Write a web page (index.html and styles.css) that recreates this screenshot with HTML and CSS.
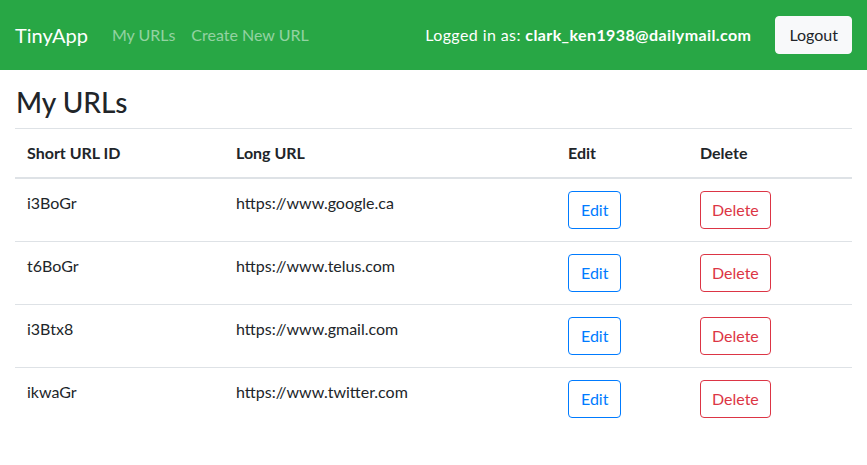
FILE: index.html
```html
<!DOCTYPE html>
<html lang="en">
<head>
<meta charset="utf-8">
<title>TinyApp</title>
<link rel="stylesheet" href="styles.css">
</head>
<body>
<nav class="navbar">
  <div class="nav-left">
    <a class="brand" href="#">TinyApp</a>
    <a class="nav-link" href="#">My URLs</a>
    <a class="nav-link" href="#">Create New URL</a>
  </div>
  <div class="nav-right">
    <span class="user">Logged in as: <b>clark_ken1938@dailymail.com</b></span>
    <button class="btn btn-light">Logout</button>
  </div>
</nav>
<main class="container">
  <h3 class="title">My URLs</h3>
  <table class="table">
    <colgroup>
      <col class="c1"><col class="c2"><col class="c3"><col class="c4">
    </colgroup>
    <thead>
      <tr><th>Short URL ID</th><th>Long URL</th><th>Edit</th><th>Delete</th></tr>
    </thead>
    <tbody>
      <tr><td>i3BoGr</td><td>https://www.google.ca</td><td><button class="btn btn-outline-primary">Edit</button></td><td><button class="btn btn-outline-danger">Delete</button></td></tr>
      <tr><td>t6BoGr</td><td>https://www.telus.com</td><td><button class="btn btn-outline-primary">Edit</button></td><td><button class="btn btn-outline-danger">Delete</button></td></tr>
      <tr><td>i3Btx8</td><td>https://www.gmail.com</td><td><button class="btn btn-outline-primary">Edit</button></td><td><button class="btn btn-outline-danger">Delete</button></td></tr>
      <tr><td>ikwaGr</td><td>https://www.twitter.com</td><td><button class="btn btn-outline-primary">Edit</button></td><td><button class="btn btn-outline-danger">Delete</button></td></tr>
    </tbody>
  </table>
</main>
</body>
</html>
```

FILE: styles.css
```css
* { box-sizing: border-box; }
body {
  margin: 0;
  font-family: "Lato", "Noto Sans", sans-serif;
  font-size: 16px;
  line-height: 1.5;
  color: #212529;
  background: #fff;
}
.navbar {
  background: #28a745;
  height: 70px;
  padding: 16px 15px 16px 15px;
  display: flex;
  align-items: center;
  justify-content: space-between;
}
.nav-left { display: flex; align-items: center; }
.brand {
  color: #fff;
  font-size: 20px;
  text-decoration: none;
  margin-right: 16px;
  line-height: 30px;
}
.nav-link {
  color: rgba(255,255,255,.5);
  text-decoration: none;
  padding: 8px;
}
.nav-right { display: flex; align-items: center; gap: 24px; }
.user { color: #fff; letter-spacing: 0.4px; }
.user b { font-weight: 700; }
.btn {
  font-family: inherit;
  font-size: 16px;
  line-height: 24px;
  padding: 6px 12px;
  border: 1px solid transparent;
  border-radius: 4px;
  background: transparent;
  cursor: pointer;
}
.btn-light { background: #f8f9fa; border-color: #f8f9fa; color: #212529; padding: 6px 13px; }
.btn-outline-primary { color: #007bff; border-color: #007bff; }
.btn-outline-danger { color: #dc3545; border-color: #dc3545; padding: 6px 11px; }
.container { padding: 0 15px; }
.title {
  font-size: 28px;
  font-weight: 500;
  line-height: 1.2;
  margin: 16px 0 8px 1px;
}
.table {
  width: 100%;
  border-collapse: collapse;
}
.c1 { width: 209px; }
.c2 { width: 332px; }
.c3 { width: 132px; }
.table th, .table td {
  text-align: left;
  vertical-align: top;
  padding: 12px;
  border-top: 1px solid #dee2e6;
}
.table th { font-weight: 700; }
.table thead th { border-bottom: 2px solid #dee2e6; }
```
